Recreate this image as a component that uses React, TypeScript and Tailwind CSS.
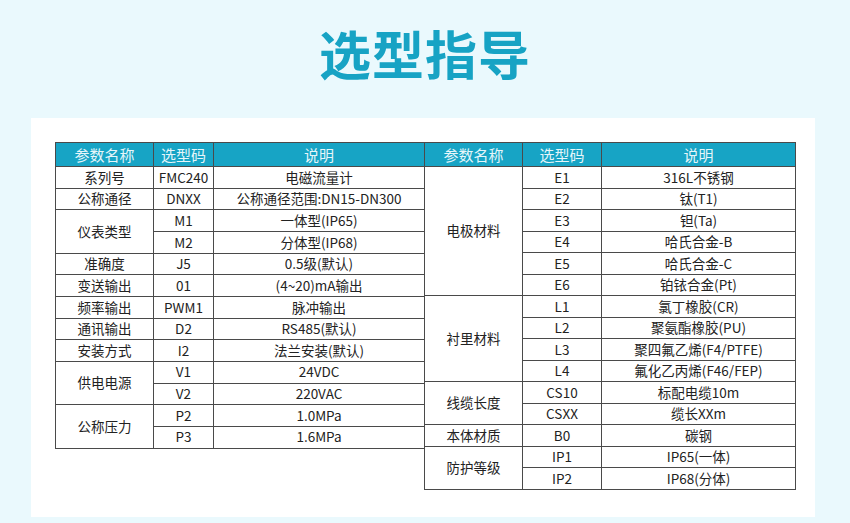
import React from 'react'

type Row = { name?: string; span?: number; code: string; desc: string }

const leftRows: Row[] = [
  { name: '系列号', code: 'FMC240', desc: '电磁流量计' },
  { name: '公称通径', code: 'DNXX', desc: '公称通径范围:DN15-DN300' },
  { name: '仪表类型', span: 2, code: 'M1', desc: '一体型(IP65)' },
  { code: 'M2', desc: '分体型(IP68)' },
  { name: '准确度', code: 'J5', desc: '0.5级(默认)' },
  { name: '变送输出', code: '01', desc: '(4~20)mA输出' },
  { name: '频率输出', code: 'PWM1', desc: '脉冲输出' },
  { name: '通讯输出', code: 'D2', desc: 'RS485(默认)' },
  { name: '安装方式', code: 'I2', desc: '法兰安装(默认)' },
  { name: '供电电源', span: 2, code: 'V1', desc: '24VDC' },
  { code: 'V2', desc: '220VAC' },
  { name: '公称压力', span: 2, code: 'P2', desc: '1.0MPa' },
  { code: 'P3', desc: '1.6MPa' },
]

const rightRows: Row[] = [
  { name: '电极材料', span: 6, code: 'E1', desc: '316L不锈钢' },
  { code: 'E2', desc: '钛(T1)' },
  { code: 'E3', desc: '钽(Ta)' },
  { code: 'E4', desc: '哈氏合金-B' },
  { code: 'E5', desc: '哈氏合金-C' },
  { code: 'E6', desc: '铂铱合金(Pt)' },
  { name: '衬里材料', span: 4, code: 'L1', desc: '氯丁橡胶(CR)' },
  { code: 'L2', desc: '聚氨酯橡胶(PU)' },
  { code: 'L3', desc: '聚四氟乙烯(F4/PTFE)' },
  { code: 'L4', desc: '氟化乙丙烯(F46/FEP)' },
  { name: '线缆长度', span: 2, code: 'CS10', desc: '标配电缆10m' },
  { code: 'CSXX', desc: '缆长XXm' },
  { name: '本体材质', code: 'B0', desc: '碳钢' },
  { name: '防护等级', span: 2, code: 'IP1', desc: 'IP65(一体)' },
  { code: 'IP2', desc: 'IP68(分体)' },
]

const cell = 'border border-[#4a4a4a] text-center p-0 leading-none whitespace-nowrap'

function SpecTable({
  rows,
  widths,
  rowClass,
  className,
}: {
  rows: Row[]
  widths: [string, string, string]
  rowClass: string
  className?: string
}) {
  return (
    <table className={`border-collapse table-fixed ${className ?? ''}`}>
      <colgroup>
        <col className={widths[0]} />
        <col className={widths[1]} />
        <col className={widths[2]} />
      </colgroup>
      <thead>
        <tr className="h-[24px] bg-[#17a4c5] text-[#e6f6fa] text-[15px]">
          <th className={`${cell} font-normal`}>参数名称</th>
          <th className={`${cell} font-normal`}>选型码</th>
          <th className={`${cell} font-normal`}>说明</th>
        </tr>
      </thead>
      <tbody className="text-[13.5px] text-[#222]">
        {rows.map((r, i) => (
          <tr key={i} className={rowClass}>
            {r.name && (
              <td className={cell} rowSpan={r.span ?? 1}>
                {r.name}
              </td>
            )}
            <td className={cell}>{r.code}</td>
            <td className={cell}>{r.desc}</td>
          </tr>
        ))}
      </tbody>
    </table>
  )
}

export default function App() {
  return (
    <div
      className="w-[850px] h-[523px] bg-[#eaf9fd] overflow-hidden"
      style={{ fontFamily: '"Noto Sans CJK SC", "Noto Sans", sans-serif' }}
    >
      <h1 className="h-[118px] pt-[27px] text-center text-[52px] font-bold leading-none text-[#17a3c4] tracking-[1px]">
        选型指导
      </h1>
      <div className="ml-[31px] w-[784px] h-[399px] bg-white pt-[24px] pl-[24px]">
        <div className="flex items-start">
          <SpecTable
            rows={leftRows}
            widths={['w-[98px]', 'w-[60px]', 'w-[211px]']}
            rowClass="h-[21.67px]"
          />
          <SpecTable
            rows={rightRows}
            widths={['w-[98px]', 'w-[79px]', 'w-[194px]']}
            rowClass="h-[21.5px]"
            className="-ml-px"
          />
        </div>
      </div>
    </div>
  )
}
